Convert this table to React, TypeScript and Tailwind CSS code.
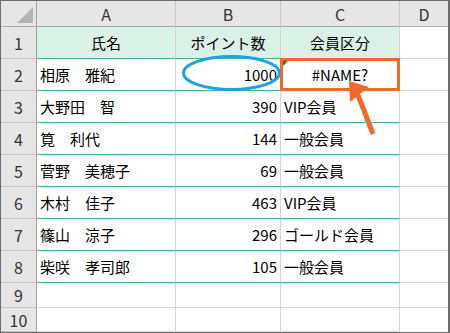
const rows = [
  { n: 1, a: "氏名", b: "ポイント数", c: "会員区分" },
  { n: 2, a: "相原　雅紀", b: "1000", c: "#NAME?" },
  { n: 3, a: "大野田　智", b: "390", c: "VIP会員" },
  { n: 4, a: "筧　利代", b: "144", c: "一般会員" },
  { n: 5, a: "菅野　美穂子", b: "69", c: "一般会員" },
  { n: 6, a: "木村　佳子", b: "463", c: "VIP会員" },
  { n: 7, a: "篠山　涼子", b: "296", c: "ゴールド会員" },
  { n: 8, a: "柴咲　孝司郎", b: "105", c: "一般会員" },
];

/* 列見出し */
function ColumnHeader() {
  return (
    <div className="flex h-[26px] shrink-0 bg-[#e6e6e6] text-[16px] text-[#333]">
      <div className="relative w-[36px] shrink-0 border-r border-b border-r-[#a0a0a0] border-b-[#a8a8a8]">
        <svg className="absolute left-0 top-0" width="35" height="25">
          <polygon points="32,6 32,22 16,22" fill="#b4b4b4" />
        </svg>
      </div>
      <div className="flex w-[139px] shrink-0 items-center justify-center border-r border-b border-r-[#c8c8c8] border-b-[#a8a8a8]">A</div>
      <div className="flex w-[105px] shrink-0 items-center justify-center border-r border-b border-r-[#c8c8c8] border-b-[#a8a8a8]">B</div>
      <div className="flex w-[119px] shrink-0 items-center justify-center border-r border-b border-r-[#c8c8c8] border-b-[#a8a8a8]">C</div>
      <div className="flex w-[48px] shrink-0 items-center justify-center border-b border-b-[#a8a8a8]">D</div>
    </div>
  );
}

function DataRow({ row }: { row: (typeof rows)[number] }) {
  const head = row.n === 1;
  const bg = head ? "bg-[#daf1e8]" : "bg-white";
  return (
    <div className="flex h-[32px] shrink-0 text-[15px] text-black">
      <div className="flex w-[36px] shrink-0 items-center justify-center border-r border-b border-r-[#a0a0a0] border-b-[#c4c4c4] bg-[#e6e6e6] text-[16px] text-[#333]">
        {row.n}
      </div>
      <div className={`flex w-[139px] shrink-0 items-center border-r border-b border-r-[#d4d4d4] border-b-[#3dbd8f] ${bg} ${head ? "justify-center" : "pl-[3px]"}`}>
        {row.a}
      </div>
      <div className={`flex w-[105px] shrink-0 items-center border-r border-b border-r-[#d4d4d4] border-b-[#3dbd8f] ${bg} ${head ? "justify-center" : "justify-end pr-[3px]"}`}>
        {row.b}
      </div>
      <div className={`flex w-[119px] shrink-0 items-center border-r border-b border-r-[#d4d4d4] border-b-[#3dbd8f] ${bg} ${head || row.n === 2 ? "justify-center" : "pl-[3px]"}`}>
        {row.c}
      </div>
      <div className="w-[48px] shrink-0 border-b border-b-[#d4d4d4] bg-white" />
    </div>
  );
}

function EmptyRow({ n, h }: { n: number; h: string }) {
  return (
    <div className={`flex shrink-0 text-[16px] ${h}`}>
      <div className="flex w-[36px] shrink-0 items-center justify-center border-r border-b border-r-[#a0a0a0] border-b-[#c4c4c4] bg-[#e6e6e6] text-[#333]">
        {n}
      </div>
      <div className="w-[139px] shrink-0 border-r border-b border-[#d4d4d4]" />
      <div className="w-[105px] shrink-0 border-r border-b border-[#d4d4d4]" />
      <div className="w-[119px] shrink-0 border-r border-b border-[#d4d4d4]" />
      <div className={`w-[48px] shrink-0 ${n === 10 ? "" : "border-b border-[#d4d4d4]"}`} />
    </div>
  );
}

export default function App() {
  return (
    <div className="relative flex h-[333px] w-[450px] flex-col overflow-hidden border border-r-2 border-[#6e6e6e] bg-white font-['Noto_Sans_CJK_JP',sans-serif] leading-none">
      <ColumnHeader />
      {rows.map((r) => (
        <DataRow key={r.n} row={r} />
      ))}
      <EmptyRow n={9} h="h-[25px]" />
      <EmptyRow n={10} h="h-[24px]" />

      {/* 注釈: 楕円・枠・矢印 */}
      <svg className="pointer-events-none absolute left-[-1px] top-[-1px]" width="450" height="333">
        <ellipse cx="231.5" cy="73" rx="48" ry="16.5" fill="none" stroke="#1ba3e2" strokeWidth="3" />
        <rect x="281.5" y="59.5" width="117" height="30" fill="none" stroke="#f26a2b" strokeWidth="3" />
        <polygon points="283,61 288,61 283,66" fill="#1e7d3c" />
        <line x1="358" y1="95" x2="373" y2="134" stroke="#f26a2b" strokeWidth="5" />
        <polygon points="349,81 369,87 350,102" fill="#f26a2b" />
      </svg>
    </div>
  );
}
